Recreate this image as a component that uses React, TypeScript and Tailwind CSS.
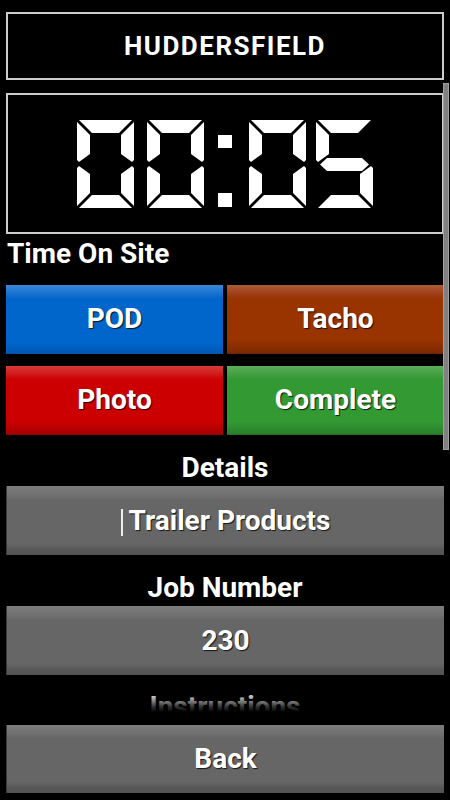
import type { ReactNode } from 'react';

// seven-segment polygons, digit box 57 x 88
const SEGMENTS: Record<string, string> = {
  a: '2,0 55,0 42,13 15,13',
  b: '57,2 44,15 44,34 55,42 57,40',
  c: '57,86 44,73 44,54 55,46 57,48',
  d: '2,88 55,88 42,75 15,75',
  e: '0,86 13,73 13,54 2,46 0,48',
  f: '0,2 13,15 13,34 2,42 0,40',
  g: '4,44.5 11,38 46,38 53,44.5 46,51 11,51',
};

const DIGITS: Record<string, string[]> = {
  '0': ['a', 'b', 'c', 'd', 'e', 'f'],
  '5': ['a', 'c', 'd', 'f', 'g'],
};

function Digit({ value, x }: { value: string; x: number }): JSX.Element {
  return (
    <g transform={`translate(${x} 0)`}>
      {DIGITS[value].map((s) => (
        <polygon key={s} points={SEGMENTS[s]} fill="#ffffff" />
      ))}
    </g>
  );
}

function Clock(): JSX.Element {
  return (
    <svg width="296" height="88" viewBox="0 0 296 88">
      <Digit value="0" x={0} />
      <Digit value="0" x={70} />
      <rect x="141" y="15" width="14" height="13" fill="#ffffff" />
      <rect x="141" y="73" width="14" height="14" fill="#ffffff" />
      <Digit value="0" x={172} />
      <Digit value="5" x={239} />
    </svg>
  );
}

function ColorButton({ className, children }: { className: string; children: ReactNode }): JSX.Element {
  return (
    <div
      className={`flex h-[69px] items-center justify-center text-[28px] font-bold text-white [text-shadow:1px_1px_1px_rgba(0,0,0,0.8)] ${className}`}
    >
      {children}
    </div>
  );
}

function GrayButton({ children, height = 'h-[69px]' }: { children: ReactNode; height?: string }): JSX.Element {
  return (
    <div
      className={`flex ${height} items-center justify-center border-l border-[#3a3a3a] bg-[linear-gradient(to_bottom,#7d7d7d,#707070_14%,#666666_20%,#666666_84%,#585858_92%,#525252)] text-[28px] font-bold text-white [text-shadow:1px_1px_1px_rgba(0,0,0,0.8)]`}
    >
      {children}
    </div>
  );
}

function Label({ children, className = '' }: { children: ReactNode; className?: string }): JSX.Element {
  return <div className={`h-[34px] text-[28px] leading-[34px] font-bold text-white ${className}`}>{children}</div>;
}

export default function App(): JSX.Element {
  return (
    <div className="relative flex h-[800px] w-[450px] flex-col overflow-hidden bg-black font-[family-name:Roboto,sans-serif]">
      <div className="mx-[6px] mt-[12px] flex h-[68px] items-center justify-center border-2 border-[#cccccc] text-[26px] font-bold tracking-[1.5px] text-white">
        HUDDERSFIELD
      </div>

      <div className="relative mt-[3px] h-[629px] overflow-hidden">
        <div className="px-[6px] pt-[10px]">
          <div className="flex h-[141px] items-center justify-center border-2 border-[#cccccc]">
            <Clock />
          </div>
          <Label className="mt-[3px] pl-[1px]">Time On Site</Label>

          <div className="mt-[14px] grid grid-cols-2 gap-x-[4px] gap-y-[12px]">
            <ColorButton className="border-b border-[#0052a8] bg-[linear-gradient(to_bottom,#3a88d8,#1a74d0_12%,#0066cc_20%,#0066cc_85%,#0058b4)]">
              POD
            </ColorButton>
            <ColorButton className="border-b border-[#6e2400] bg-[linear-gradient(to_bottom,#ad5c36,#a0401a_12%,#993300_20%,#993300_80%,#7e2800)]">
              Tacho
            </ColorButton>
            <ColorButton className="border-b border-[#8a0000] bg-[linear-gradient(to_bottom,#d83a3a,#d01a1a_12%,#cc0000_20%,#cc0000_82%,#a40000)]">
              Photo
            </ColorButton>
            <ColorButton className="border-b border-[#226e22] bg-[linear-gradient(to_bottom,#5cae5c,#42a042_12%,#339933_20%,#339933_82%,#2a7f2a)]">
              Complete
            </ColorButton>
          </div>

          <Label className="mt-[16px] text-center">Details</Label>
          <div className="mt-[1px]">
            <GrayButton>
              <span className="mr-[6px] inline-block h-[27px] w-[2px] translate-y-[2px] bg-[#eeeeee]" />
              Trailer Products
            </GrayButton>
          </div>

          <Label className="mt-[16px] text-center">Job Number</Label>
          <div className="mt-[1px]">
            <GrayButton>230</GrayButton>
          </div>

          <Label className="mt-[15px] text-center">Instructions</Label>
          <div className="mt-[1px]">
            <GrayButton>&nbsp;</GrayButton>
          </div>
        </div>

        <div className="pointer-events-none absolute bottom-0 left-0 right-0 h-[18px] bg-[linear-gradient(to_bottom,rgba(0,0,0,0.1),rgba(0,0,0,0.8)_70%,#000)]" />
        <div className="absolute right-[1px] top-0 h-[367px] w-[6px] border border-[#a0a0a0] bg-[#808080]" />
      </div>

      <div className="mx-[6px] mt-[13px]">
        <GrayButton height="h-[68px]">Back</GrayButton>
      </div>
    </div>
  );
}
